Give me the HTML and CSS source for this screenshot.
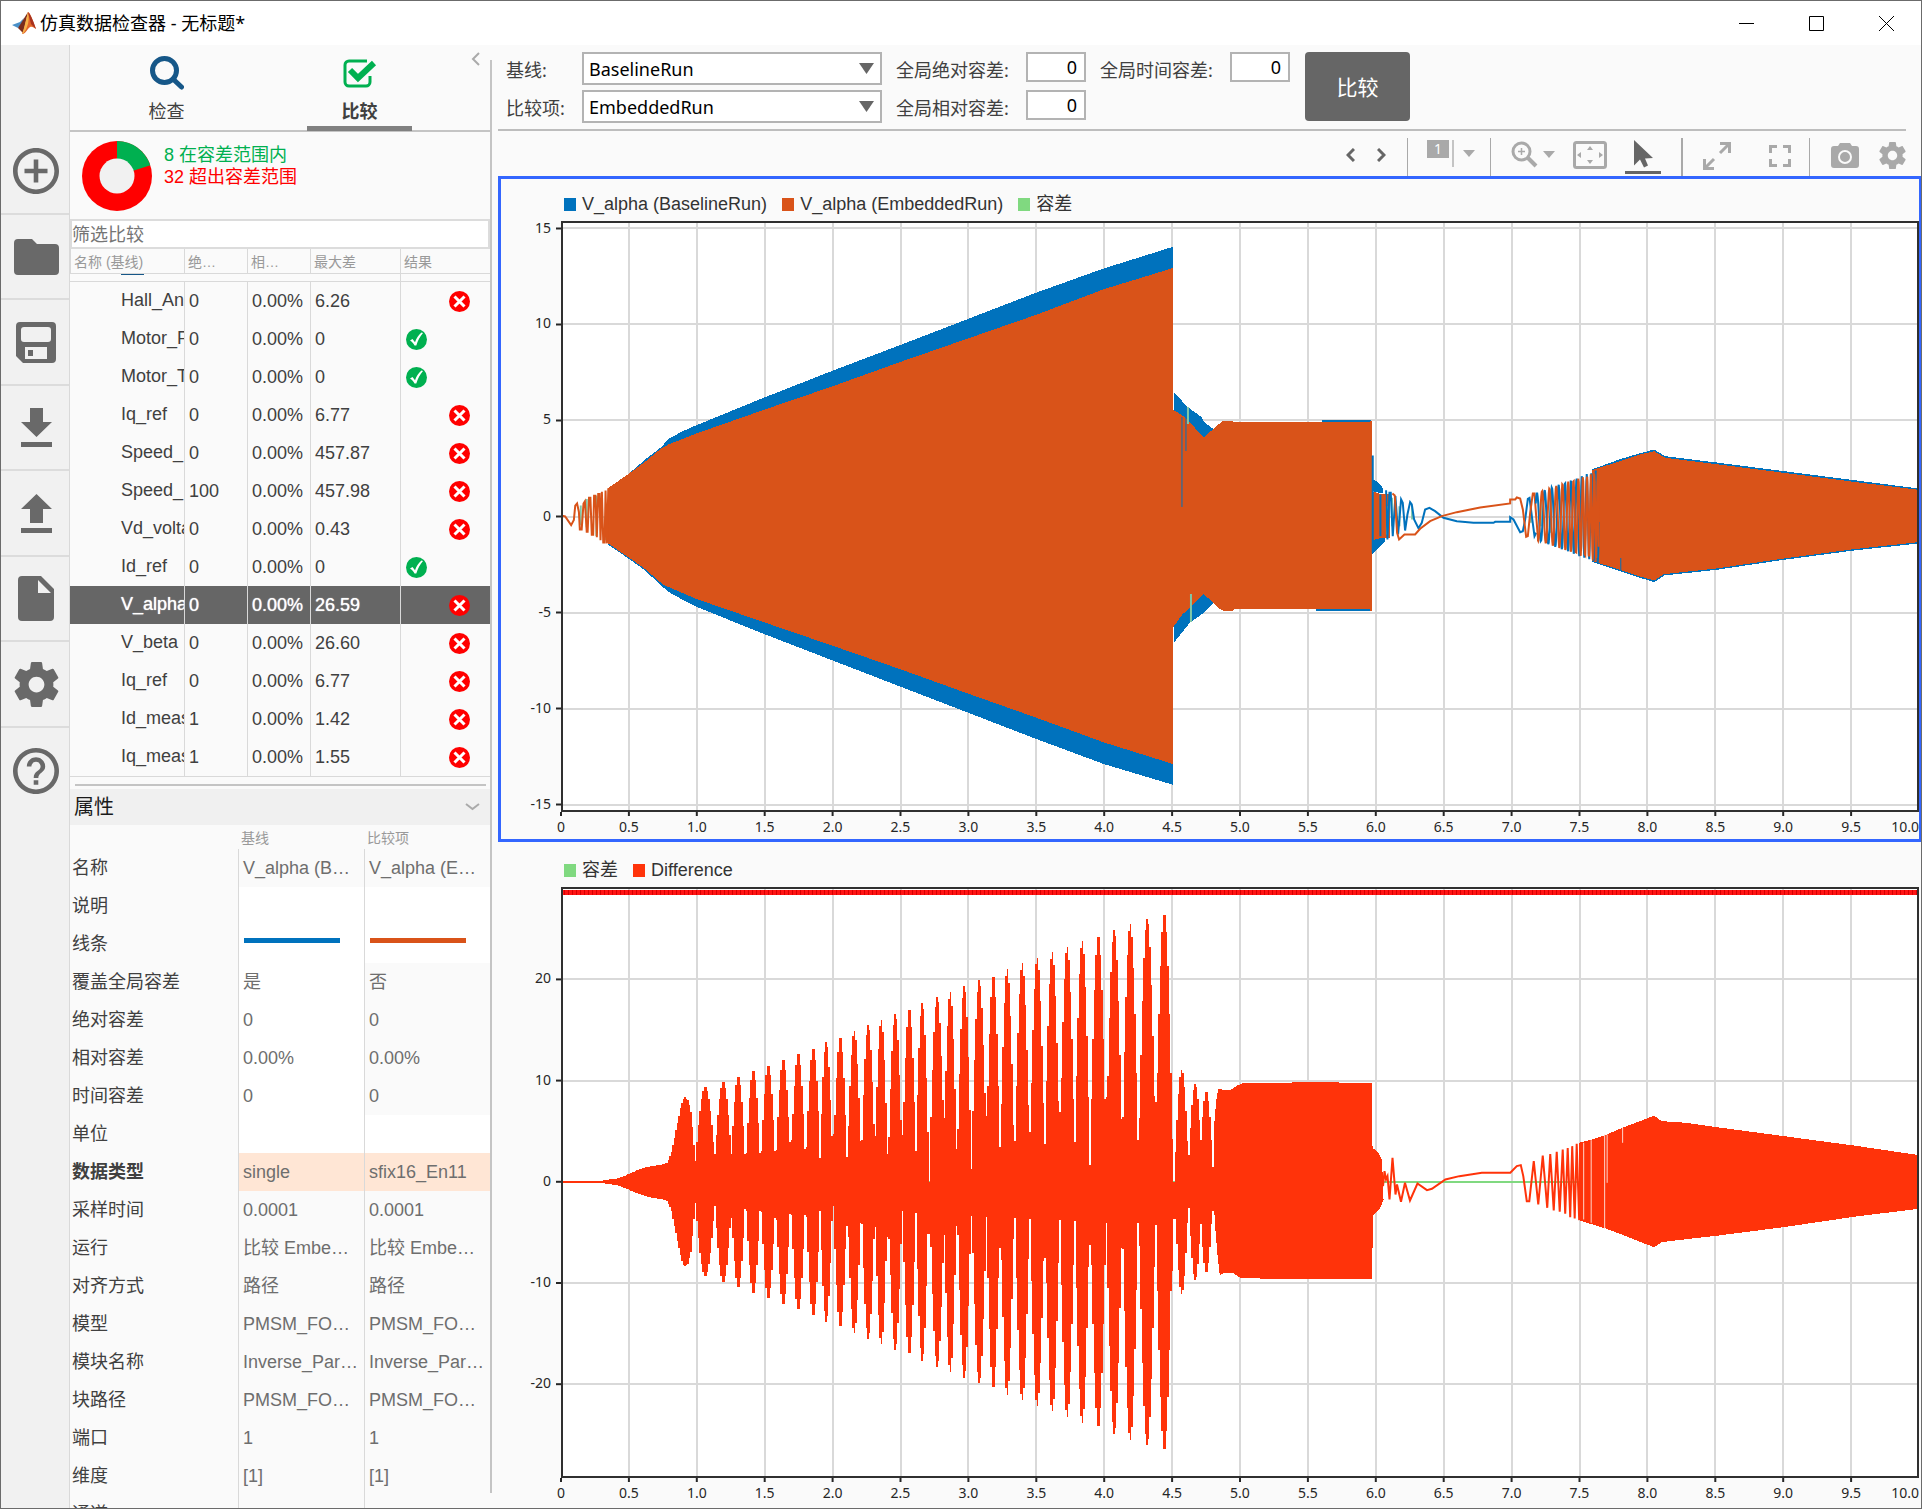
FILE: index.html
```html
<!DOCTYPE html>
<html lang="zh-CN">
<head>
<meta charset="utf-8">
<title>仿真数据检查器 - 无标题*</title>
<link rel="stylesheet" href="styles.css">
</head>
<body>
<svg class="sprite" aria-hidden="true">
  <symbol id="i-gear" viewBox="2 2 20 20"><path fill="currentColor" d="M19.43 12.98c.04-.32.07-.64.07-.98s-.03-.66-.07-.98l2.11-1.65c.19-.15.24-.42.12-.64l-2-3.46c-.12-.22-.39-.3-.61-.22l-2.49 1c-.52-.4-1.08-.73-1.69-.98l-.38-2.65C14.46 2.18 14.25 2 14 2h-4c-.25 0-.46.18-.49.42l-.38 2.65c-.61.25-1.17.59-1.69.98l-2.49-1c-.23-.09-.49 0-.61.22l-2 3.46c-.13.22-.07.49.12.64l2.11 1.65c-.04.32-.07.65-.07.98s.03.66.07.98l-2.11 1.65c-.19.15-.24.42-.12.64l2 3.46c.12.22.39.3.61.22l2.49-1c.52.4 1.08.73 1.69.98l.38 2.65c.03.24.24.42.49.42h4c.25 0 .46-.18.49-.42l.38-2.65c.61-.25 1.17-.59 1.69-.98l2.49 1c.23.09.49 0 .61-.22l2-3.46c.12-.22.07-.49-.12-.64l-2.11-1.65zM12 15.5c-1.93 0-3.5-1.57-3.5-3.5s1.57-3.5 3.5-3.5 3.5 1.57 3.5 3.5-1.57 3.5-3.5 3.5z"/></symbol>
  <symbol id="i-fail" viewBox="0 0 21 21"><circle cx="10.500" cy="10.500" r="10.500" fill="#f00"/><path d="M5.500 5.500l10 10M15.500 5.500l-10 10" stroke="#fff" stroke-width="3" fill="none"/></symbol>
  <symbol id="i-pass" viewBox="0 0 21 21"><circle cx="10.500" cy="10.500" r="10.500" fill="#00b050"/><path d="M4 11.500l2.500-1.500 2.500 3.200C10.500 9 12.500 6 15.500 3.500l1.500.6C14 7.500 12 11.500 10.300 16.500H8.500C7.500 14.500 6 12.800 4 11.500z" fill="#fff"/></symbol>
  <symbol id="i-caret" viewBox="0 0 12 7"><path d="M0 0h12L6 7z" fill="currentColor"/></symbol>
  <symbol id="i-drop" viewBox="0 0 15 11"><path d="M0 0h15L7.500 11z" fill="currentColor"/></symbol>
</svg>

<div class="window">
  <header class="titlebar">
    <svg class="logo" width="24" height="22" viewBox="0 0 24 22" aria-hidden="true">
      <path d="M0 13l8-3 4-4-3 8-3 2z" fill="#4a90c8"/>
      <path d="M6 16l5-8 5-8-3 14-2 7-3-3z" fill="#7b2d1c"/>
      <path d="M16 0c2 0 5 9 8 17-3-2-5-4-8 0-2 3-4 5-6 5l2-5z" fill="#e2662a"/>
      <path d="M16 0c1 5 1 10-1 15-1 3-3 6-5 7l2-6z" fill="#f5b24a"/>
      <path d="M16 0c3 3 6 11 8 17l-5-5z" fill="#a8321f"/>
    </svg>
    <h1 class="title">仿真数据检查器 - 无标题*</h1>
    <div class="window-buttons">
      <button type="button" aria-label="最小化"><svg width="15" height="15" viewBox="0 0 15 15"><path d="M0 7.500h15" stroke="#000"/></svg></button>
      <button type="button" aria-label="最大化"><svg width="15" height="15" viewBox="0 0 15 15"><path d="M.5.5h14v14H.5z" stroke="#000" fill="none"/></svg></button>
      <button type="button" aria-label="关闭"><svg width="15" height="15" viewBox="0 0 15 15"><path d="M0 0l15 15M15 0L0 15" stroke="#000"/></svg></button>
    </div>
  </header>

  <div class="body">
    <nav class="rail" aria-label="工具">
      <button type="button" aria-label="新建"><svg width="46" height="46" viewBox="2 2 20 20"><path fill="currentColor" d="M13 7h-2v4H7v2h4v4h2v-4h4v-2h-4V7zm-1-5C6.480 2 2 6.480 2 12s4.480 10 10 10 10-4.480 10-10S17.520 2 12 2zm0 18c-4.410 0-8-3.590-8-8s3.590-8 8-8 8 3.590 8 8-3.590 8-8 8z"/></svg></button>
      <button type="button" aria-label="打开"><svg width="45" height="36" viewBox="0 0 45 36"><path fill="currentColor" d="M4 0h14l5 5h18a4 4 0 0 1 4 4v23a4 4 0 0 1-4 4H4a4 4 0 0 1-4-4V4a4 4 0 0 1 4-4z"/></svg></button>
      <button type="button" aria-label="保存"><svg width="40" height="41" viewBox="0 0 40 41"><path fill="currentColor" fill-rule="evenodd" d="M4 0h32a4 4 0 0 1 4 4v33a4 4 0 0 1-4 4H7l-7-7V4a4 4 0 0 1 4-4zM8 5a3 3 0 0 0-3 3v9a3 3 0 0 0 3 3h24a3 3 0 0 0 3-3V8a3 3 0 0 0-3-3zM9 25v12h22V25zM12 28h5v6h-5z"/></svg></button>
      <button type="button" aria-label="导入"><svg width="31" height="39" viewBox="0 0 31 39"><path fill="currentColor" d="M9 0h13v14h9L15.500 29 0 14h9zM0 34h31v5H0z"/></svg></button>
      <button type="button" aria-label="导出"><svg width="31" height="39" viewBox="0 0 31 39"><path fill="currentColor" d="M9 29h13V15h9L15.500 0 0 15h9zM0 34h31v5H0z"/></svg></button>
      <button type="button" aria-label="报告"><svg width="36" height="45" viewBox="0 0 36 45"><path fill="currentColor" fill-rule="evenodd" d="M4 0h19l13 13v28a4 4 0 0 1-4 4H4a4 4 0 0 1-4-4V4a4 4 0 0 1 4-4zM20 4v13h13z"/></svg></button>
      <button type="button" aria-label="预设"><svg width="45" height="45"><use href="#i-gear"/></svg></button>
      <button type="button" aria-label="帮助"><svg width="46" height="46" viewBox="2 2 20 20"><path fill="currentColor" d="M11 18h2v-2h-2v2zm1-16C6.480 2 2 6.480 2 12s4.480 10 10 10 10-4.480 10-10S17.520 2 12 2zm0 18c-4.410 0-8-3.590-8-8s3.590-8 8-8 8 3.590 8 8-3.590 8-8 8zm0-14c-2.210 0-4 1.790-4 4h2c0-1.100.9-2 2-2s2 .9 2 2c0 2-3 1.750-3 5h2c0-2.250 3-2.500 3-5 0-2.210-1.790-4-4-4z"/></svg></button>
    </nav>

    <aside class="sidebar">
      <div class="tabs">
        <button type="button" class="tab">
          <svg width="34" height="34" viewBox="0 0 34 34"><circle cx="14.500" cy="14.500" r="12" fill="none" stroke="#165788" stroke-width="5"/><path d="M23 23l8.500 8" stroke="#165788" stroke-width="5" stroke-linecap="round"/></svg>
          <span>检查</span>
        </button>
        <button type="button" class="tab tab-active">
          <svg width="34" height="34" viewBox="0 0 34 34"><path d="M24 5H6a4 4 0 0 0-4 4v17a4 4 0 0 0 4 4h17a4 4 0 0 0 4-4v-6" fill="none" stroke="#00b050" stroke-width="3"/><path d="M7 14l8 8L31 7" fill="none" stroke="#00b050" stroke-width="6"/></svg>
          <span>比较</span>
        </button>
        <button type="button" class="collapse" aria-label="折叠"><svg width="9" height="14" viewBox="0 0 9 14"><path d="M8 1L2 7l6 6" fill="none" stroke="#aaa" stroke-width="2"/></svg></button>
      </div>

      <div class="summary">
        <svg width="70" height="70" viewBox="0 0 70 70" aria-hidden="true">
          <circle cx="35" cy="35" r="35" fill="#f00"/>
          <path d="M35 35V0A35 35 0 0 1 68.300 24.200z" fill="#00b050"/>
          <circle cx="35" cy="35" r="17.500" fill="#f1f1f1"/>
        </svg>
        <div>
          <p class="in-tol">8 在容差范围内</p>
          <p class="out-tol">32 超出容差范围</p>
        </div>
      </div>

      <input class="filter" type="text" placeholder="筛选比较" aria-label="筛选比较">

      <table class="signals">
        <colgroup><col class="c-name"><col class="c-tol"><col class="c-tol"><col class="c-max"><col></colgroup>
        <thead><tr><th>名称 (基线)</th><th>绝…</th><th>相…</th><th>最大差</th><th>结果</th></tr></thead>
        <tbody>
          <tr class="cut"><td colspan="4"><i></i></td><td></td></tr>
          <tr><td>Hall_An</td><td>0</td><td>0.00%</td><td>6.26</td><td class="fail"><svg><use href="#i-fail"/></svg></td></tr>
          <tr><td>Motor_P</td><td>0</td><td>0.00%</td><td>0</td><td><svg><use href="#i-pass"/></svg></td></tr>
          <tr><td>Motor_T</td><td>0</td><td>0.00%</td><td>0</td><td><svg><use href="#i-pass"/></svg></td></tr>
          <tr><td>Iq_ref</td><td>0</td><td>0.00%</td><td>6.77</td><td class="fail"><svg><use href="#i-fail"/></svg></td></tr>
          <tr><td>Speed_</td><td>0</td><td>0.00%</td><td>457.87</td><td class="fail"><svg><use href="#i-fail"/></svg></td></tr>
          <tr><td>Speed_</td><td>100</td><td>0.00%</td><td>457.98</td><td class="fail"><svg><use href="#i-fail"/></svg></td></tr>
          <tr><td>Vd_volta</td><td>0</td><td>0.00%</td><td>0.43</td><td class="fail"><svg><use href="#i-fail"/></svg></td></tr>
          <tr><td>Id_ref</td><td>0</td><td>0.00%</td><td>0</td><td><svg><use href="#i-pass"/></svg></td></tr>
          <tr class="selected"><td>V_alpha</td><td>0</td><td>0.00%</td><td>26.59</td><td class="fail"><svg><use href="#i-fail"/></svg></td></tr>
          <tr><td>V_beta</td><td>0</td><td>0.00%</td><td>26.60</td><td class="fail"><svg><use href="#i-fail"/></svg></td></tr>
          <tr><td>Iq_ref</td><td>0</td><td>0.00%</td><td>6.77</td><td class="fail"><svg><use href="#i-fail"/></svg></td></tr>
          <tr><td>Id_meas</td><td>1</td><td>0.00%</td><td>1.42</td><td class="fail"><svg><use href="#i-fail"/></svg></td></tr>
          <tr><td>Iq_meas</td><td>1</td><td>0.00%</td><td>1.55</td><td class="fail"><svg><use href="#i-fail"/></svg></td></tr>
        </tbody>
      </table>

      <hr class="splitter">

      <section class="props">
        <h2>属性 <svg width="15" height="8" viewBox="0 0 15 8"><path d="M1 1l6.500 5L14 1" fill="none" stroke="#aaa" stroke-width="2"/></svg></h2>
        <table>
          <colgroup><col class="c-prop"><col><col></colgroup>
          <thead><tr><td></td><th>基线</th><th>比较项</th></tr></thead>
          <tbody>
            <tr><th>名称</th><td>V_alpha (B…</td><td>V_alpha (E…</td></tr>
            <tr><th>说明</th><td class="edit"></td><td class="edit"></td></tr>
            <tr><th>线条</th><td class="edit"><span class="line line-base"></span></td><td class="edit"><span class="line line-cmp"></span></td></tr>
            <tr><th>覆盖全局容差</th><td class="edit">是</td><td>否</td></tr>
            <tr><th>绝对容差</th><td class="edit">0</td><td>0</td></tr>
            <tr><th>相对容差</th><td class="edit">0.00%</td><td>0.00%</td></tr>
            <tr><th>时间容差</th><td class="edit">0</td><td>0</td></tr>
            <tr><th>单位</th><td class="edit"></td><td class="edit"></td></tr>
            <tr class="differs"><th>数据类型</th><td>single</td><td>sfix16_En11</td></tr>
            <tr><th>采样时间</th><td>0.0001</td><td>0.0001</td></tr>
            <tr><th>运行</th><td>比较 Embe…</td><td>比较 Embe…</td></tr>
            <tr><th>对齐方式</th><td>路径</td><td>路径</td></tr>
            <tr><th>模型</th><td>PMSM_FO…</td><td>PMSM_FO…</td></tr>
            <tr><th>模块名称</th><td>Inverse_Par…</td><td>Inverse_Par…</td></tr>
            <tr><th>块路径</th><td>PMSM_FO…</td><td>PMSM_FO…</td></tr>
            <tr><th>端口</th><td>1</td><td>1</td></tr>
            <tr><th>维度</th><td>[1]</td><td>[1]</td></tr>
            <tr><th>通道</th><td></td><td></td></tr>
          </tbody>
        </table>
      </section>
    </aside>
    <div class="divider"></div>

    <main class="main">
      <form class="compare">
        <label for="base">基线:</label>
        <span class="select"><select id="base"><option>BaselineRun</option></select><svg width="15" height="11"><use href="#i-drop"/></svg></span>
        <label for="abs">全局绝对容差:</label><input id="abs" type="text" value="0">
        <label for="time">全局时间容差:</label><input id="time" type="text" value="0">
        <button type="button" class="go">比较</button>
        <label for="cmp">比较项:</label>
        <span class="select"><select id="cmp"><option>EmbeddedRun</option></select><svg width="15" height="11"><use href="#i-drop"/></svg></span>
        <label for="rel">全局相对容差:</label><input id="rel" type="text" value="0">
      </form>

      <div class="toolbar">
        <div class="group g-nav">
          <button type="button" aria-label="上一个"><svg width="9" height="14" viewBox="0 0 9 14"><path d="M8 1L2 7l6 6" fill="none" stroke="#666" stroke-width="3"/></svg></button>
          <button type="button" aria-label="下一个"><svg width="9" height="14" viewBox="0 0 9 14"><path d="M1 1l6 6-6 6" fill="none" stroke="#666" stroke-width="3"/></svg></button>
        </div>
        <div class="group g-layout">
          <button type="button" class="layout" aria-label="布局"><span class="count">1</span><span class="bar"></span><svg width="12" height="7"><use href="#i-caret"/></svg></button>
        </div>
        <div class="group g-zoom">
          <button type="button" class="zoom" aria-label="放大"><svg width="27" height="27" viewBox="0 0 27 27"><circle cx="10.500" cy="10.500" r="8.500" fill="none" stroke="currentColor" stroke-width="3"/><path d="M10.500 7v7M7 10.500h7" stroke="currentColor" stroke-width="1.500"/><path d="M17 17l8 8" stroke="currentColor" stroke-width="4"/></svg><svg width="12" height="7"><use href="#i-caret"/></svg></button>
          <button type="button" aria-label="适应视图"><svg width="34" height="28" viewBox="0 0 34 28"><rect x="1.500" y="1.500" width="31" height="25" rx="2" fill="none" stroke="currentColor" stroke-width="3"/><path d="M17 5l3 4h-6zM17 23l3-4h-6zM4 14l4-3v6zM30 14l-4-3v6z" fill="currentColor"/></svg></button>
          <button type="button" class="pointer" aria-label="选择"><svg width="19" height="28" viewBox="0 0 19 28"><path d="M0 0l19 18-8 .5 3 7-4 2-4-8-6 6z" fill="#666"/></svg></button>
        </div>
        <div class="group g-size">
          <button type="button" aria-label="最大化绘图"><svg width="28" height="28" viewBox="0 0 28 28"><g fill="none" stroke="currentColor" stroke-width="3"><path d="M17 1.500h9.500V11M26 2l-9 9M1.500 17v9.500H11M2 26l9-9"/></g></svg></button>
          <button type="button" aria-label="全屏"><svg width="22" height="22" viewBox="0 0 22 22"><path d="M1.500 8V1.500H8M14 1.500h6.500V8M20.500 14v6.500H14M8 20.500H1.500V14" fill="none" stroke="currentColor" stroke-width="3"/></svg></button>
        </div>
        <div class="group g-end">
          <button type="button" aria-label="快照"><svg width="28" height="26" viewBox="0 0 28 26"><path fill="currentColor" fill-rule="evenodd" d="M9 0h10l2 3h4a3 3 0 0 1 3 3v16a3 3 0 0 1-3 3H3a3 3 0 0 1-3-3V6a3 3 0 0 1 3-3h4zM14 7a7 7 0 1 0 0 14 7 7 0 1 0 0-14zM14 9a5 5 0 1 1 0 10 5 5 0 1 1 0-10z"/></svg></button>
          <button type="button" aria-label="设置"><svg width="27" height="27"><use href="#i-gear"/></svg></button>
        </div>
      </div>

      <section class="chart chart-active">
        <ul class="legend"><li><i class="k-base"></i>V_alpha (BaselineRun)</li><li><i class="k-cmp"></i>V_alpha (EmbeddedRun)</li><li><i class="k-tol"></i>容差</li></ul>
        <div class="frame" data-top="15.390" data-bottom="-15.390" data-step="5">
          <svg class="y-axis"></svg>
          <svg class="plot" viewBox="0 0 1357 591" preserveAspectRatio="none">
            <g class="grid"></g>
            <g class="base area" transform="translate(-71.600 -51.500) scale(.459 .4337)">
              <path d="M258 735L303 702 340 668 372 642 392 620 420 604 450 590 598 526 747 464 894 405 1041 345 1188 285 1338 228 1489 178V1419L1338 1371 1188 1312 1041 1252 894 1192 747 1132 598 1071 450 1008 396 978 372 958 340 925 303 897 258 865z"/>
            </g>
            <g class="base area" transform="translate(578.500 148.500) scale(.4988 .3333)">
              <path d="M68 68L95 112 123 142 130 160 147 178 147 700 130 728 100 760 68 820z"/>
              <path d="M365 152H462V726H353z"/>
              <path d="M905 300L960 270 1000 252 1030 240 1052 260 1155 279 1290 305 1425 331 1565 358V521L1425 544 1290 571 1155 601 1050 618 1030 638 1000 624 960 604 905 577z"/>
            </g>
            <g class="cmp area" transform="translate(-71.600 -51.500) scale(.459 .4337)">
              <path d="M258 735L303 702 340 673 372 645 390 634 450 609 598 554 747 500 894 444 1041 390 1188 336 1338 276 1489 227V1371L1338 1321 1188 1263 1041 1208 894 1152 747 1098 598 1044 450 990 378 957 340 922 303 894 258 862z"/>
            </g>
            <g class="cmp area" transform="translate(578.500 148.500) scale(.4988 .3333)">
              <path d="M66 120L92 145 128 205 147 178 165 155 184 154 188 158H460V154H465V725H460V720H188L184 725H168L157 716 147 700 128 674 100 715 85 735 66 775z"/>
              <path d="M905 302L960 276 1000 256 1030 245 1052 265 1155 284 1290 310 1425 336 1565 362V517L1425 540 1290 567 1155 597 1050 614 1030 633 1000 620 960 600 905 574z"/>
            </g>
            <g class="tol trace" transform="translate(-71.600 -51.500) scale(.459 .4337)">
              <path d="M199 820V775M212 825V760M233 845V752M252 855V800"/>
            </g>
            <g class="cmp trace" transform="translate(-71.600 -51.500) scale(.459 .4337)">
              <path d="M156 798L165 800 178 820 184 808 187 775 191 770 195 790 197 830 201 830 205 770 208 765 212 835 214 835 217 757 220 757 223 842 226 842 228 752 231 752 234 848 237 748 240 748 242 855 245 743 248 860 251 860 253 740 256 862 259 735"/>
            </g>
            <path class="tol trace" d="M626.500 186V203M629.500 373V401"/>
            <path class="base trace thin" d="M620.500 196V286M624.500 196V230M1059 337V350"/>
            <g transform="translate(598.500 198.500) scale(.3333)">
              <path class="base area" d="M637 180L650 185 668 205V222L637 215zM637 405L645 395 675 365V350L637 358z"/>
              <path class="cmp area" d="M637 215L657 222 690 224V356H660L637 362z"/>
              <path class="tol trace" d="M680 260V345M696 235V320M718 260V320M756 260V300M1112 250V310M1142 240V320M1172 220V340"/>
              <path class="base trace" d="M638 108V400M661 225V350M678 212L682 360 688 220 692 220 698 350 706 230 714 345 723 240 728 250 735 333 742 285 750 248 755 255 762 300 775 326 785 310 795 270 808 265 825 275 850 295 890 305 940 310H1000L1005 307H1050V293L1060 300 1080 338 1088 335 1095 300 1103 238 1108 235 1115 290 1123 350 1128 340"/>
              <path class="cmp trace" d="M674 225V355M697 222L704 228 711 340 717 360 733 345H765L780 328 810 305 845 290 890 278 960 264 1050 252V240H1065L1070 234 1080 237 1088 270 1098 352 1103 350 1110 280 1118 222 1123 222 1128 290 1134 365"/>
            </g>
            <path id="restart-base" class="base trace"></path>
            <path id="restart-cmp" class="cmp trace"></path>
            <rect class="box" x="1" y="1" width="1355" height="589"/>
          </svg>
          <svg class="x-axis"></svg>
        </div>
      </section>

      <section class="chart">
        <ul class="legend"><li><i class="k-tol"></i>容差</li><li><i class="k-diff"></i>Difference</li></ul>
        <div class="frame" data-top="29.130" data-bottom="-29.270" data-step="10">
          <svg class="y-axis"></svg>
          <svg class="plot" viewBox="0 0 1357 591" preserveAspectRatio="none">
            <g class="grid"></g>
            <path class="tol-line trace" d="M0 295H1357"/>
            <path class="diff trace" d="M0 295H45"/>
            <path id="bursts" class="diff area"></path>
            <g transform="translate(578.500 132.500) scale(.4988 .3333)">
              <path class="diff area" d="M147 487L149 310 153 242 157 207 170 213 180 213 195 198 205 192H305V188H398V192H464L466 385 478 400 485 420 488 540 480 570 468 585 464 780H243L240 777 202 776 188 762 168 760 160 768 155 700 150 610z"/>
              <path class="diff trace" d="M487 500L490 455 493 480 496 470 500 540 506 415 512 525 515 495 523 547 531 490 541 543 556 492 575 512 585 508 612 480 640 470 685 460H742L755 440 763 437 768 470 775 545 780 545 789 425 798 555 807 408 816 565 822 404 829 573 835 397 841 577 847 390 852 583 857 386 862 593 866 380 871 597 875 373 880 602"/>
              <path class="diff area" d="M880 370L905 360 935 345 970 323 1000 306 1030 288 1045 305 1095 310 1160 324 1290 350 1430 378 1565 408V567L1430 592 1290 623 1160 648 1090 660 1045 668 1030 683 1000 666 965 645 935 628 900 612 880 602z"/>
              <path class="gap trace" d="M889 370V600M904 362V610M931 345V628M936 345V490M967 325V370"/>
            </g>
            <path class="flag" d="M0 5H1357"/>
            <path class="flag flag-dash" d="M0 5H1357"/>
            <rect class="box" x="1" y="1" width="1355" height="589"/>
          </svg>
          <svg class="x-axis"></svg>
        </div>
      </section>
    </main>
  </div>
</div>
<script src="charts.js"></script>
</body>
</html>
```

FILE: styles.css
```css
* { box-sizing: border-box; }

:root {
  --ui: "Noto Sans", "Noto Sans CJK SC", sans-serif;
  --data: "Liberation Sans", "Noto Sans CJK SC", sans-serif;
  --rule: #d9d9d9;
  --base: #0072bd;
  --cmp: #d95319;
  --tol: #80d980;
  --diff: #ff330a;
}

body {
  margin: 0;
  font: 18px/24px var(--ui);
  color: #404040;
}

button {
  padding: 0;
  border: 0;
  background: none;
  font: inherit;
  color: inherit;
}

svg { display: block; flex: none; }
.sprite { position: absolute; width: 0; height: 0; }

.window {
  display: flex;
  flex-direction: column;
  height: 100vh;
  border: 1px solid #6b6b6b;
  background: #fafafa;
  overflow: hidden;
}

/* title bar */
.titlebar {
  display: flex;
  align-items: center;
  height: 44px;
  padding-left: 11px;
  background: #fff;
}
.title {
  flex: 1;
  margin: 0 0 0 4px;
  font-size: 18px;
  font-weight: 400;
  color: #000;
}
.window-buttons { display: flex; }
.window-buttons button {
  display: grid;
  place-items: center;
  width: 70px;
  height: 44px;
}

.body { display: flex; flex: 1; min-height: 0; }

/* icon rail */
.rail {
  display: flex;
  flex-direction: column;
  width: 69px;
  padding-top: 84px;
  border-right: 1px solid var(--rule);
  background: #f1f1f1;
  color: #696969;
}
.rail button {
  display: grid;
  place-items: center;
  height: 86px;
  padding-left: 2px;
  border-bottom: 2px solid #dcdcdc;
}
.rail button:nth-child(even) { height: 85px; }
.rail button:last-child { border: 0; }

/* side panel */
.sidebar {
  display: flex;
  flex-direction: column;
  width: 420px;
  min-height: 0;
  overflow: hidden;
}
.tabs {
  display: grid;
  grid-template-columns: 1fr 1fr 34px;
  height: 87px;
  border-bottom: 2px solid #c4c4c4;
  flex: none;
}
.tab {
  display: flex;
  flex-direction: column;
  align-items: center;
  gap: 9px;
  justify-self: center;
  width: 105px;
  height: 86px;
  padding-top: 11px;
}
.tab-active { border-bottom: 5px solid #808080; font-weight: 700; }
.collapse { align-self: start; padding: 7px 0 0 15px; }

.summary {
  display: flex;
  gap: 12px;
  height: 87px;
  padding: 9px 0 0 12px;
  font-family: var(--data);
  flex: none;
}
.summary p { margin: 0; line-height: 22px; }
.summary div { padding-top: 3px; }
.in-tol { color: #00b050; }
.out-tol { color: #f00; }

.filter {
  height: 30px;
  padding: 0;
  border: 2px solid #dcdcdc;
  background: #fff;
  font: 18px/24px var(--ui);
  flex: none;
}
.filter::placeholder { color: #757575; }

table { width: 100%; table-layout: fixed; border-collapse: separate; border-spacing: 0; }
th, td { padding: 0; text-align: left; font-weight: 400; white-space: nowrap; overflow: hidden; }

.signals { font-family: var(--data); border-bottom: 1px solid var(--rule); flex: none; }
.c-name { width: 114px; }
.c-tol { width: 63px; }
.c-max { width: 90px; }
.signals thead th {
  height: 25px;
  padding: 2px 0 0 3px;
  border-left: 1px solid var(--rule);
  border-bottom: 1px solid var(--rule);
  font-size: 14px;
  line-height: 22px;
  color: #999;
}
.signals td { height: 38px; padding-left: 4px; border-left: 1px solid var(--rule); }
.signals td:first-child { padding: 0 0 2px 51px; border-left: 0; }
.signals td:last-child { padding-left: 5px; }
.signals .cut td { height: 8px; padding-bottom: 0; border-bottom: 1px solid var(--rule); vertical-align: top; line-height: 7px; }
.cut i { display: block; width: 23px; height: 1px; background: #165788; }
.signals svg { width: 21px; height: 21px; }
.signals .fail svg { margin-left: 43px; }
.selected td { background: #666; color: #fff; text-shadow: 0 0 1px #fff; }

.splitter {
  width: 411px;
  height: 2px;
  margin: 7px auto 3px;
  border: 0;
  background: #c4c4c4;
  flex: none;
}

.props { min-height: 0; overflow: hidden; }
.props h2 {
  display: flex;
  align-items: center;
  justify-content: space-between;
  height: 36px;
  margin: 0;
  padding: 0 10px 0 4px;
  background: #f0f0f0;
  font-size: 20px;
  font-weight: 400;
  color: #1a1a1a;
}
.c-prop { width: 168px; }
.props table { font-family: var(--data); }
.props thead th { height: 24px; padding: 2px 0 0 3px; font-size: 14px; line-height: 22px; color: #999; }
.props tbody th { height: 38px; padding-left: 2px; }
.props tbody td { padding-left: 4px; border-left: 1px solid var(--rule); color: #6e6e6e; }
.props .edit { background: #fff; }
.props .differs th { font-weight: 700; }
.props .differs td { background: #ffe6d5; }
.line { display: block; width: 96px; height: 5px; margin: 0 0 7px 1px; }
.line-base { background: var(--base); }
.line-cmp { background: var(--cmp); }

.divider { width: 2px; margin: 15px 0; background: #c4c4c4; }

/* comparison settings */
.main {
  display: flex;
  flex: 1;
  flex-direction: column;
  min-width: 0;
  padding-left: 6px;
}
.compare {
  display: grid;
  grid-template-columns: 76px 300px 144px 60px 144px 60px 120px;
  grid-template-rows: 33px 33px;
  row-gap: 5px;
  margin-right: 15px;
  padding: 7px 0 6px 8px;
  border-bottom: 2px solid #bdbdbd;
}
.compare label { line-height: 36px; }
.compare input + label, .select + label { padding-left: 14px; }
.select { display: grid; }
.select select, .select svg { grid-area: 1 / 1; }
.select select {
  appearance: none;
  border: 2px solid #b3b3b3;
  border-radius: 0;
  background: #fff;
  padding: 0 5px;
  font: 18px/24px var(--ui);
  color: #000;
}
.select svg { place-self: center end; margin-right: 8px; color: #666; pointer-events: none; }
.compare input {
  width: 60px;
  height: 30px;
  padding: 0 7px;
  border: 2px solid #b3b3b3;
  background: #fff;
  font: 18px/24px var(--ui);
  color: #000;
  text-align: right;
}
.go {
  grid-row: 1 / 3;
  grid-column: 7;
  justify-self: end;
  width: 105px;
  height: 69px;
  border-radius: 4px;
  background: #666;
  color: #fff;
  font-size: 21px;
}

/* plot toolbar */
.toolbar {
  display: flex;
  justify-content: flex-end;
  height: 45px;
  padding-top: 7px;
  color: #a9a9a9;
  flex: none;
}
.group { display: flex; align-items: center; border-left: 1px solid #a9a9a9; }
.group button { display: flex; align-items: center; }
.g-nav { gap: 22px; padding-right: 21px; border: 0; }
.g-nav button { padding-bottom: 4px; }
.g-layout { padding: 0 15px 0 19px; }
.layout { height: 28px; margin-bottom: 8px; }
.count {
  width: 22px;
  height: 18px;
  margin-bottom: 8px;
  background: #a9a9a9;
  color: #fff;
  font-size: 14px;
  line-height: 18px;
}
.bar { width: 2px; height: 27px; margin: 0 9px 0 3px; background: #c4c4c4; }
.g-zoom { gap: 18px; padding: 0 20px 0 20px; }
.g-zoom button { height: 38px; padding-bottom: 5px; }
.zoom { gap: 5px; }
.group .pointer { width: 36px; justify-content: center; height: 36px; padding: 0 0 2px; border-bottom: 3px solid #666; align-self: start; }
.g-size { gap: 38px; padding: 0 18px 0 20px; border-left-width: 2px; }
.g-size button, .g-end button { padding-bottom: 3px; }
.g-end { gap: 20px; padding: 0 15px 0 21px; }

/* charts */
.chart {
  display: flex;
  flex: 1;
  flex-direction: column;
  min-height: 0;
  border: 3px solid transparent;
  border-right-width: 2px;
}
.chart-active { border-color: #36f; }
.legend {
  display: flex;
  gap: 15px;
  height: 42px;
  margin: 0;
  padding: 0 0 0 63px;
  list-style: none;
  font-family: var(--data);
  line-height: 50px;
  color: #333;
}
.legend li { display: flex; align-items: center; gap: 6px; height: 50px; }
.legend i { width: 12px; height: 13px; }
.k-base { background: var(--base); }
.k-cmp { background: var(--cmp); }
.k-tol { background: var(--tol); }
.k-diff { background: var(--diff); }

.frame {
  display: grid;
  grid-template-columns: 60px 1fr;
  grid-template-rows: 1fr 27px;
  flex: 1;
  min-height: 0;
}
.frame svg { width: 100%; height: 100%; min-height: 0; overflow: visible; }
.frame .plot { background: #fff; overflow: hidden; }
.x-axis { grid-column: 2; }
.y-axis text, .x-axis text { font: 14px var(--ui); fill: #262626; }
.y-axis line, .x-axis line { stroke: #262626; stroke-width: 2; }
.plot { shape-rendering: crispEdges; }
.plot * { vector-effect: non-scaling-stroke; }
.grid line { stroke: #d9d9d9; stroke-width: 2; }
.box { fill: none; stroke: #303030; stroke-width: 2; }
.area.base, .base.area path { fill: var(--base); }
.area.cmp, .cmp.area path { fill: var(--cmp); }
.area.diff { fill: var(--diff); }
.trace { fill: none; stroke-width: 2; shape-rendering: geometricPrecision; }
.trace.base { stroke: var(--base); }
.trace.cmp { stroke: var(--cmp); }
.trace.tol { stroke: #80c8a8; }
.tol-line { stroke: var(--tol); }
.trace.diff { stroke: var(--diff); }
.trace.gap { stroke: #ffd6cc; stroke-width: 1; }
.trace.thin { stroke-width: 1; }
.flag { stroke: #d80000; stroke-width: 5; fill: none; }
.flag-dash { stroke: #ff1414; stroke-dasharray: 3 1; }
```

FILE: charts.js
```js
const NS = 'http://www.w3.org/2000/svg';

function add(parent, name, attrs, text) {
  const el = document.createElementNS(NS, name);
  for (const key in attrs) el.setAttribute(key, attrs[key]);
  if (text !== undefined) el.textContent = text;
  parent.appendChild(el);
}

// Grid lines, tick marks and tick labels of one plot.
function drawAxes(frame) {
  const top = Number(frame.dataset.top);
  const bottom = Number(frame.dataset.bottom);
  const step = Number(frame.dataset.step);
  const grid = frame.querySelector('.grid');
  const yAxis = frame.querySelector('.y-axis');
  const xAxis = frame.querySelector('.x-axis');

  for (let v = Math.ceil(bottom / step) * step; v <= top; v += step) {
    const y = (top - v) / (top - bottom) * 100 + '%';
    add(grid, 'line', { x1: 0, x2: '100%', y1: y, y2: y });
    add(yAxis, 'line', { x1: 55, x2: 60, y1: y, y2: y });
    add(yAxis, 'text', { x: 50, y: y, 'text-anchor': 'end', dy: 4 }, v);
  }
  for (let i = 0; i <= 20; i++) {
    const x = i * 5 + '%';
    const anchor = i === 20 ? 'end' : 'middle';
    add(grid, 'line', { x1: x, x2: x, y1: 0, y2: '100%' });
    if (i < 20) add(xAxis, 'line', { x1: x, x2: x, y1: 0, y2: 4 });
    add(xAxis, 'text', { x: x, y: 20, 'text-anchor': anchor }, i ? (i / 2).toFixed(1) : '0');
  }
}
document.querySelectorAll('.frame').forEach(drawAxes);

// Oscillation whose amplitude grows while its period shrinks.
function chirp(x0, x1, amp0, amp1, period0, period1, phase) {
  let d = '';
  let angle = phase;
  for (let x = x0; x <= x1; x += 0.5) {
    const k = (x - x0) / (x1 - x0);
    const amp = amp0 + (amp1 - amp0) * k;
    d += (d ? 'L' : 'M') + x + ' ' + (295.5 - amp * Math.sin(angle)).toFixed(1);
    angle += Math.PI / (period0 + (period1 - period0) * k);
  }
  return d;
}
document.getElementById('restart-base').setAttribute('d', chirp(974, 1037, 23, 47, 8, 4, 0.6));
document.getElementById('restart-cmp').setAttribute('d', chirp(976, 1037, 24, 46, 8, 3, 4.4));

// Envelope of the difference signal: the run-up, then a row of beats.
const UNIT = 10.12;
const runUp = [[39, .1], [57, .35], [67, .75], [75, 1.1], [87, 1.5], [100, 1.7], [106, 1.9],
  [110, 2.8], [114, 4.7], [117, 6.2], [120, 7.6], [123, 8.4], [127, 8.1], [130, 6.8], [133, 3.4], [136, .8]];
const centers = [123, 144, 162, 177, 192, 207, 222, 237, 252, 265, 279, 293, 307, 320, 334, 348, 361,
  376, 389, 403, 418, 432, 446, 461, 476, 491, 506, 521, 537, 553, 569, 586, 603, 620.5, 634, 645];
const tail = [11.1, 9.7, 9];

function envelope(x, sign) {
  if (x < 134) {
    for (let i = 1; i < runUp.length; i++) {
      const [a, va] = runUp[i - 1];
      const [b, vb] = runUp[i];
      if (x <= b) return Math.max(0, va + (vb - va) * (x - a) / (b - a));
    }
  }
  // Between two beats the signal is a thin band that wanders about zero.
  let nearest = 1;
  for (let i = 1; i < centers.length; i++) {
    if (Math.abs(x - centers[i]) < Math.abs(x - centers[nearest])) nearest = i;
  }
  const amp = nearest <= 32 ? 9.4 + 17.2 * (nearest - 1) / 31 : tail[nearest - 33];
  const gapIndex = x < centers[nearest] ? nearest - 1 : nearest;
  const drift = amp / 16 * 3.6 * Math.sin(gapIndex * 2.3);
  const floor = amp / 16 * 1.8 + sign * drift;
  const gap = nearest > 32 ? 14 : centers[nearest] - centers[nearest - 1];
  const half = 0.54 * gap;
  const u = Math.min(1, Math.abs(x - centers[nearest]) / half);
  return Math.max(floor, amp * Math.cos(u * Math.PI / 2));
}

function side(sign, from, to, step) {
  const points = [];
  for (let x = from; sign > 0 ? x < to : x > to; x += step) {
    const y = 294.8 - sign * UNIT * envelope(x + step / 2, sign);
    points.push(x + ' ' + y.toFixed(1), x + step + ' ' + y.toFixed(1));
  }
  return points;
}
document.getElementById('bursts').setAttribute('d',
  'M' + side(1, 39, 654, 1.5).concat(side(-1, 654, 39, -1.5)).join('L') + 'z');
```
